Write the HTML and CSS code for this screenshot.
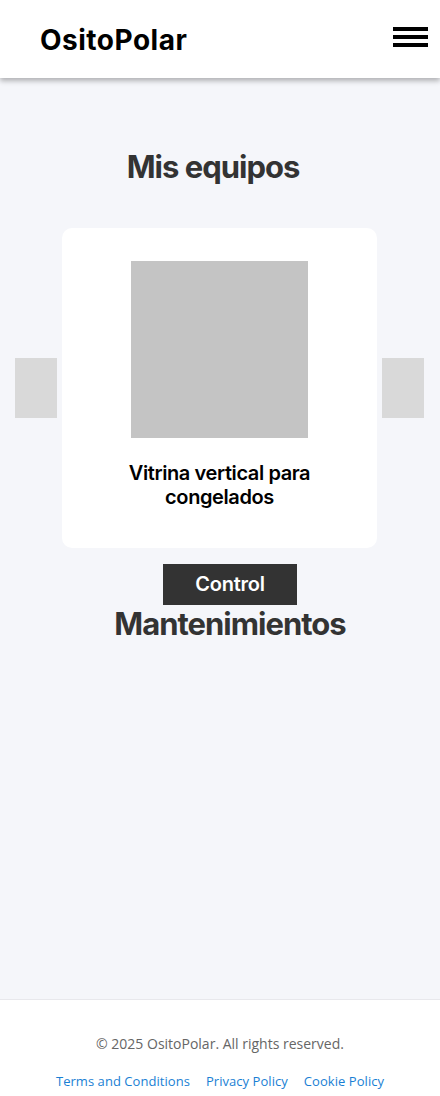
FILE: index.html
```html
<!DOCTYPE html>
<html lang="es">
<head>
<meta charset="utf-8">
<title>OsitoPolar</title>
<link rel="stylesheet" href="styles.css">
</head>
<body>
<header class="topbar">
  <div class="logo">OsitoPolar</div>
  <button class="menu" aria-label="Menú">
    <span></span><span></span><span></span>
  </button>
</header>
<main class="content">
  <h1 class="section-title first">Mis equipos</h1>
  <div class="carousel">
    <button class="nav-btn" aria-label="Anterior"></button>
    <div class="card">
      <div class="card-img"></div>
      <h2 class="card-title">Vitrina vertical para congelados</h2>
    </div>
    <button class="nav-btn" aria-label="Siguiente"></button>
  </div>
  <section class="maint">
    <button class="control-btn">Control</button>
    <h1 class="section-title second">Mantenimientos</h1>
  </section>
</main>
<footer class="footer">
  <p class="copy">© 2025 OsitoPolar. All rights reserved.</p>
  <nav class="links">
    <a href="#">Terms and Conditions</a>
    <a href="#">Privacy Policy</a>
    <a href="#">Cookie Policy</a>
  </nav>
</footer>
</body>
</html>
```
FILE: styles.css
```css
* { box-sizing: border-box; }
html, body { margin: 0; padding: 0; }
body {
  font-family: Inter, "Noto Sans", sans-serif;
  background: #f5f6fa;
  color: #333;
  min-height: 1096px;
  display: flex;
  flex-direction: column;
}
.topbar {
  height: 78px;
  background: #fff;
  display: flex;
  align-items: center;
  justify-content: space-between;
  padding: 0 12px 0 40px;
  box-shadow: 0 3px 5px rgba(0,0,0,0.28);
  position: relative;
  z-index: 1;
}
.logo {
  font-size: 28px;
  font-weight: 700;
  letter-spacing: 0.5px;
  color: #000;
  line-height: 34px;
  margin-top: 1px;
}
.menu {
  width: 35px;
  height: 20px;
  padding: 0;
  border: 0;
  background: none;
  display: flex;
  flex-direction: column;
  justify-content: space-between;
  align-self: flex-start;
  margin-top: 27px;
}
.menu span {
  display: block;
  height: 4px;
  background: #000;
}
.content {
  flex: 1;
  padding-top: 69px;
}
.section-title {
  margin: 0;
  text-align: center;
  font-size: 31px;
  line-height: 39px;
  font-weight: 700;
  letter-spacing: -1px;
  color: #333;
}
.section-title.first {
  padding-right: 14px;
}
.section-title.second {
  line-height: 36px;
  margin-top: 1px;
}
.carousel {
  display: flex;
  align-items: center;
  gap: 5px;
  padding: 0 16px 0 15px;
  margin-top: 42px;
}
.nav-btn {
  width: 42px;
  height: 60px;
  flex: none;
  border: 0;
  padding: 0;
  background: #d9d9d9;
}
.card {
  flex: 1;
  background: #fff;
  border-radius: 10px;
  padding: 33px 20px 39px;
  display: flex;
  flex-direction: column;
  align-items: center;
}
.card-img {
  width: 177px;
  height: 177px;
  background: #c4c4c4;
}
.card-title {
  margin: 23px 0 0;
  font-size: 20px;
  line-height: 24px;
  font-weight: 600;
  letter-spacing: -0.4px;
  color: #000;
  text-align: center;
  max-width: 220px;
}
.maint {
  display: flex;
  flex-direction: column;
  align-items: center;
  padding-left: 20px;
  margin-top: 16px;
}
.control-btn {
  font-family: Inter, "Noto Sans", sans-serif;
  font-size: 20px;
  font-weight: 600;
  letter-spacing: -0.2px;
  line-height: 25px;
  padding: 8px 0;
  height: 41px;
  width: 134px;
  border: 0;
  background: #333;
  color: #fff;
}
.footer {
  background: #fff;
  border-top: 1px solid #e8e8ec;
  font-family: "Open Sans", sans-serif;
  text-align: center;
  padding: 34px 0 5px;
}
.copy {
  margin: 0;
  font-size: 14px;
  color: #666;
  line-height: 20px;
}
.links {
  margin-top: 17px;
  display: flex;
  justify-content: center;
  gap: 16px;
  font-size: 13px;
  letter-spacing: 0.05px;
  line-height: 20px;
}
.links a {
  color: #1a7fd4;
  text-decoration: none;
}
```
